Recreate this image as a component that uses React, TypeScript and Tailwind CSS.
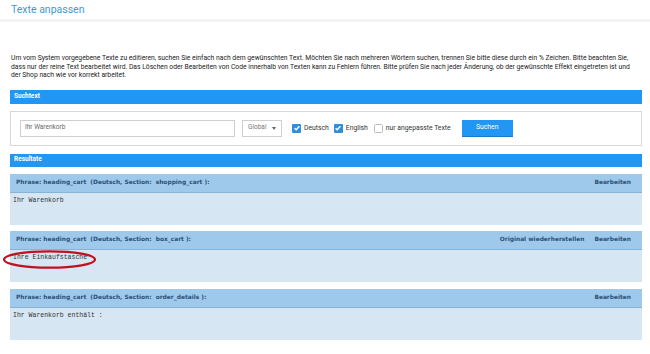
import { useState } from "react";

const results = [
  { section: "shopping_cart", text: "Ihr Warenkorb", restore: false, mt: "mt-[7px]" },
  { section: "box_cart", text: "Ihre Einkaufstasche", restore: true, mt: "mt-[6px]" },
  { section: "order_details", text: "Ihr Warenkorb enthält :", restore: false, mt: "mt-[7px]" },
];

function Check({ checked }: { checked: boolean }) {
  return checked ? (
    <span className="inline-flex h-[9px] w-[9px] items-center justify-center rounded-[1px] bg-[#2f8fdd]">
      <svg viewBox="0 0 10 10" className="h-[8px] w-[8px]" fill="none" stroke="white" strokeWidth={1.8}>
        <path d="M2 5.2l2 2 4-4.4" />
      </svg>
    </span>
  ) : (
    <span className="inline-block h-[9px] w-[9px] rounded-[1.5px] border border-[#bbb] bg-white" />
  );
}

export default function App() {
  const [query] = useState("Ihr Warenkorb");

  return (
    <div className="h-[354px] w-[650px] overflow-hidden bg-white font-['Roboto',sans-serif] text-[#333]">
      <div className="flex h-[19px] items-center pl-[11px] text-[10.5px] text-[#3c9ad8]">Texte anpassen</div>
      <div className="h-[3px] bg-[#f2f3f4]" />

      <p className="mt-[32px] pl-[11px] text-[6.75px] leading-[8.5px] text-[#222]">
        Um vom System vorgegebene Texte zu editieren, suchen Sie einfach nach dem gewünschten Text. Möchten Sie nach mehreren Wörtern suchen, trennen Sie bitte diese durch ein % Zeichen. Bitte beachten Sie,
        <br />
        dass nur der reine Text bearbeitet wird. Das Löschen oder Bearbeiten von Code innerhalb von Texten kann zu Fehlern führen. Bitte prüfen Sie nach jeder Änderung, ob der gewünschte Effekt eingetreten ist und
        <br />
        der Shop nach wie vor korrekt arbeitet.
      </p>

      <div className="ml-[10px] mt-[10px] w-[632px]">
        <div className="flex h-[14px] items-center bg-[#2196f3] pl-[4px] text-[6.5px] font-bold text-white">Suchtext</div>

        <div className="mt-[7px] flex h-[35px] items-center border border-[#d9d9d9] bg-white pl-[9px]">
          <div className="flex h-[17px] w-[215px] items-center border border-[#cfcfcf] pl-[4px] text-[6.5px] text-[#666]">
            {query}
          </div>
          <div className="ml-[7px] flex h-[17px] w-[40px] items-center justify-between border border-[#cfcfcf] px-[5px] text-[6.5px] text-[#777]">
            <span>Global</span>
            <span className="h-0 w-0 border-x-[2.5px] border-t-[3px] border-x-transparent border-t-[#666]" />
          </div>
          <label className="ml-[10px] flex items-center gap-[3px] text-[6.8px] text-[#333]">
            <Check checked />
            Deutsch
          </label>
          <label className="ml-[5px] flex items-center gap-[3px] text-[6.8px] text-[#333]">
            <Check checked />
            English
          </label>
          <label className="ml-[6px] flex items-center gap-[3px] text-[6.8px] text-[#333]">
            <Check checked={false} />
            nur angepasste Texte
          </label>
          <button className="ml-[11px] h-[17px] w-[51px] border-b border-[#1a7bc9] bg-[#2196f3] text-[6.8px] text-white">
            Suchen
          </button>
        </div>

        <div className="mt-[8px] flex h-[13px] items-center bg-[#2196f3] pl-[4px] text-[6.5px] font-bold text-white">Resultate</div>

        {results.map((r) => (
          <div key={r.section} className={`relative ${r.mt}`}>
            <div className="flex h-[19px] items-center justify-between border-b border-[#86b4d9] bg-[#9fc9ea] pl-[6px] pr-[11px] font-['DejaVu_Sans',sans-serif] text-[5.9px] font-bold text-[#2c5075]">
              <span className="whitespace-pre">{`Phrase: heading_cart  (Deutsch, Section:  ${r.section} ):`}</span>
              <span className="flex gap-[10px]">
                {r.restore && <span>Original wiederherstellen</span>}
                <span>Bearbeiten</span>
              </span>
            </div>
            <div className="h-[32px] bg-[#d6e6f3] pl-[3px] pt-[4px] font-['Liberation_Mono',monospace] text-[6.5px] leading-[8px] text-[#333]">
              {r.text}
            </div>
            {r.restore && (
              <svg className="absolute left-[-7px] top-[19px] h-[19px] w-[93px]" viewBox="0 0 93 19" fill="none">
                <ellipse cx="46.5" cy="9.5" rx="45.5" ry="8.2" stroke="#c0121c" strokeWidth="2.2" />
              </svg>
            )}
          </div>
        ))}
      </div>
    </div>
  );
}
